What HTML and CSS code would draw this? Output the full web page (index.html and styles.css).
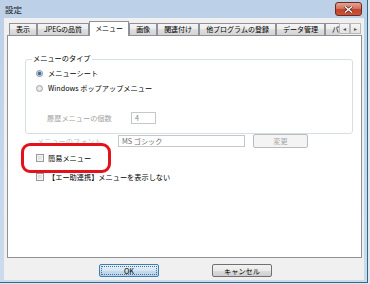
FILE: index.html
```html
<!DOCTYPE html>
<html>
<head>
<meta charset="UTF-8">
<title>設定</title>
<link rel="stylesheet" href="styles.css">
</head>
<body>
<div class="window">
	<!-- タイトルバー -->
	<div class="titlebar">
		<span class="title">設定</span>
		<span class="close">
			<svg width="9" height="7" viewBox="0 0 9 7">
				<path d="M1 0.5 L8 6.5 M8 0.5 L1 6.5" stroke="#4a1a12" stroke-width="2.6"/>
				<path d="M1 0.5 L8 6.5 M8 0.5 L1 6.5" stroke="#ffffff" stroke-width="1.4"/>
			</svg>
		</span>
	</div>
	<div class="client">
		<!-- タブ -->
		<div class="tabbar">
			<div class="tabs">
				<span class="tab">表示</span>
				<span class="tab">JPEGの品質</span>
				<span class="tab selected">メニュー</span>
				<span class="tab">画像</span>
				<span class="tab">関連付け</span>
				<span class="tab">他プログラムの登録</span>
				<span class="tab">データ管理</span>
				<span class="tab">パ</span>
			</div>
			<div class="spin">
				<span class="spin-btn">&#9666;</span>
				<span class="spin-btn">&#9656;</span>
			</div>
		</div>
		<div class="page">
			<div class="group">
				<div class="group-title">メニューのタイプ</div>
				<div class="row radio-row first">
					<span class="radio checked"></span>
					<span>メニューシート</span>
				</div>
				<div class="row radio-row">
					<span class="radio"></span>
					<span>Windows ポップアップメニュー</span>
				</div>
				<div class="row history-row">
					<span class="history-label disabled">履歴メニューの個数</span>
					<span class="textbox small">4</span>
				</div>
			</div>
			<div class="row font-row">
				<span class="font-label disabled">メニューのフォント</span>
				<span class="textbox wide">MS ゴシック</span>
				<span class="btn btn-disabled">変更</span>
			</div>
			<div class="row check-row first-check">
				<span class="checkbox"></span>
				<span>簡易メニュー</span>
			</div>
			<div class="row check-row second-check">
				<span class="checkbox"></span>
				<span>【エー助連携】メニューを表示しない</span>
			</div>
			<!-- 注目枠 -->
			<div class="highlight"></div>
		</div>
		<div class="buttons">
			<span class="btn btn-default"><span class="focus">OK</span></span>
			<span class="btn">キャンセル</span>
		</div>
	</div>
</div>
</body>
</html>
```

FILE: styles.css
```css
*{
	box-sizing: border-box;
}
body{
	margin: 0;
	width: 370px;
	height: 284px;
	overflow: hidden;
	background: #dfe7ef;
	font-family: "Noto Sans CJK JP", "Liberation Sans", sans-serif;
	font-size: 7.2px;
	color: #000;
}
.window{
	width: 368px;
	height: 283px;
	border-right: 1px solid #2f6985;
	border-bottom: 1px solid #2f6985;
	background: linear-gradient(#bcd0e8, #cbdbed);
	padding: 0 3px 2px 4px;
	display: flex;
	flex-direction: column;
}
.titlebar{
	height: 18px;
	display: flex;
	align-items: center;
	padding-left: 1px;
}
.title{
	font-size: 8.5px;
	line-height: 10px;
	color: #1b1b1b;
}
.close{
	margin-left: auto;
	margin-right: 2px;
	width: 27px;
	height: 14px;
	border: 1px solid #6b2b22;
	border-radius: 3px;
	background: linear-gradient(#e3a495, #d4735f 45%, #c2422b 55%, #c9553b);
	display: flex;
	align-items: center;
	justify-content: center;
}
.client{
	flex: 1;
	background: #f0f0f0;
	padding: 3px 2px 0 3px;
	display: flex;
	flex-direction: column;
}
.tabbar{
	height: 14px;
	display: flex;
	align-items: flex-end;
}
.tabs{
	flex: 1;
	display: flex;
	align-items: flex-end;
	padding-left: 2px;
	overflow: hidden;
	height: 15px;
	margin-bottom: -1px;
}
.tab{
	flex: none;
	height: 12px;
	margin-bottom: 1px;
	border: 1px solid #8e9298;
	border-bottom: 0;
	padding: 0 6px;
	font-size: 7px;
	line-height: 10px;
	background: linear-gradient(#f5f5f5, #ececec 50%, #dfdfdf 50%, #d3d3d3);
	white-space: nowrap;
}
.tab.selected{
	height: 15px;
	margin-bottom: 0;
	padding: 0 5px;
	background: #fff;
	line-height: 13px;
	position: relative;
	z-index: 1;
}
.spin{
	display: flex;
	margin-right: 1px;
	margin-bottom: 1px;
}
.spin-btn{
	width: 11px;
	height: 11px;
	border: 1px solid #b8b8b8;
	background: linear-gradient(#f7f7f7, #e2e2e2);
	color: #555;
	font-size: 6px;
	line-height: 9px;
	text-align: center;
}
.page{
	position: relative;
	height: 223px;
	background: #fff;
	border: 1px solid #8e9298;
}
.row{
	display: flex;
	align-items: center;
	white-space: nowrap;
}
.group{
	margin: 23px 8px 0 17px;
	height: 75px;
	border: 1px solid #d5dfe5;
	border-radius: 3px;
	padding: 0 0 0 10px;
}
.group-title{
	width: fit-content;
	height: 9px;
	line-height: 9px;
	margin: -6px 0 0 -4px;
	padding: 0 1px;
	background: #fff;
}
.radio-row{
	height: 12px;
	margin-top: 3px;
	gap: 5px;
}
.radio-row.first{
	margin-top: 4px;
}
.radio{
	width: 7px;
	height: 7px;
	border-radius: 50%;
	border: 1px solid #a2a2a2;
	background: radial-gradient(#f4f4f4, #d8d8d8);
}
.radio.checked{
	background: radial-gradient(circle, #3b5e96 0, #4f77b4 1.6px, #d9e3ef 2.2px, #e9e9e9 3px);
	border-color: #7f8c99;
}
.history-row{
	height: 12px;
	margin-top: 18px;
	padding-left: 11px;
}
.history-label{
	width: 84px;
}
.disabled{
	color: #a3a3a3;
}
.textbox{
	height: 12px;
	border: 1px solid #c4c8cc;
	background: #fff;
	line-height: 10px;
	padding-left: 3px;
	color: #6d6d6d;
}
.textbox.small{
	width: 25px;
	color: #8a8a8a;
}
.textbox.wide{
	width: 127px;
}
.font-row{
	height: 14px;
	margin-left: 29px;
}
.font-label{
	width: 81px;
	color: #c4c4c4;
}
.btn{
	display: flex;
	align-items: center;
	justify-content: center;
	height: 13px;
	width: 60px;
	border: 1px solid #707070;
	border-radius: 2px;
	background: linear-gradient(#f2f2f2, #ebebeb 50%, #dddddd 50%, #cfcfcf);
}
.btn-disabled{
	width: 55px;
	height: 14px;
	margin-left: 8px;
	border-color: #b9bcbe;
	background: #f4f4f4;
	color: #a8a8a8;
}
.check-row{
	height: 12px;
	margin-left: 28px;
	gap: 4px;
}
.first-check{
	margin-top: 4px;
}
.second-check{
	margin-top: 7px;
}
.checkbox{
	width: 8px;
	height: 8px;
	border: 1px solid #9a9a9a;
	background: linear-gradient(135deg, #d6d6d6, #f6f6f6);
	box-shadow: inset 0 0 0 1px #f4f4f4;
}
.highlight{
	position: absolute;
	left: 13px;
	top: 107px;
	width: 90px;
	height: 30px;
	border: 3px solid #e3121b;
	border-radius: 9px;
}
.buttons{
	display: flex;
	gap: 53px;
	margin: 6px 0 0 92px;
}
.btn-default{
	border-color: #3c7fb1;
	background: linear-gradient(#e6f0f8, #d6e6f3 50%, #c4dbee 50%, #b8d3ea);
	padding: 1px;
}
.focus{
	width: 100%;
	height: 100%;
	display: flex;
	align-items: center;
	justify-content: center;
	border: 1px dotted #4a6f8f;
}
```
